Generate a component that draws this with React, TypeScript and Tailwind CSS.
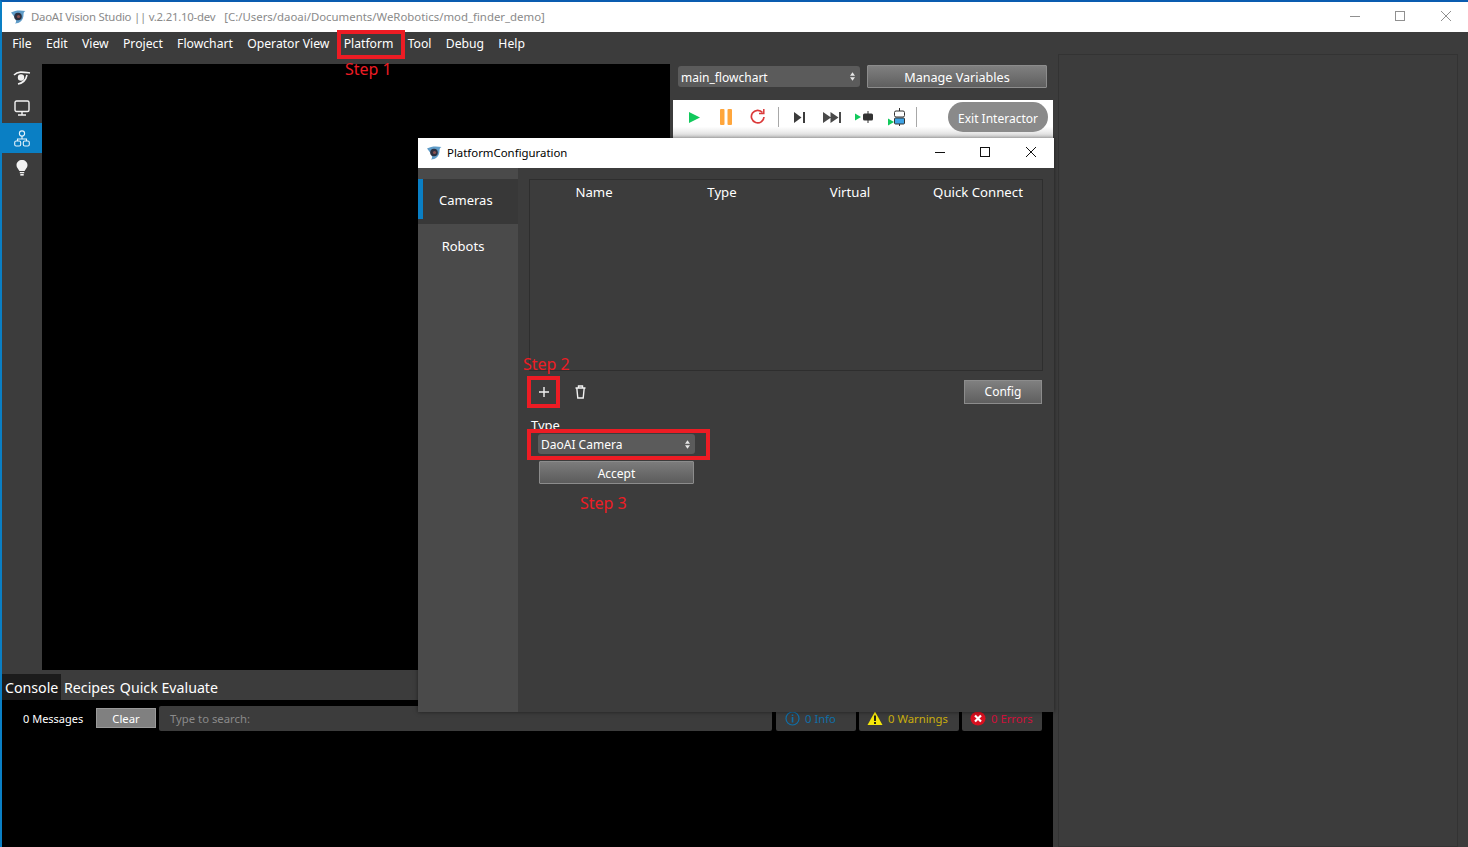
import React from 'react';

const font = { fontFamily: '"Noto Sans", "Open Sans", sans-serif' };

const menus = ['File', 'Edit', 'View', 'Project', 'Flowchart', 'Operator View', 'Platform', 'Tool', 'Debug', 'Help'];

const Logo = () => (
  <svg width="16" height="16" viewBox="0 0 16 16">
    <path d="M1 3.5 C5 1 11 1 15.5 2 C13.5 3 13.5 4.5 13.5 6 C13.5 11 9.5 14.5 5 14.5 C8 12 4 7.5 1 3.5 Z" fill="#5f9cc8" />
    <circle cx="8" cy="7.5" r="3.8" fill="#2c3040" />
    <circle cx="8.5" cy="7.5" r="1.6" fill="#8a5050" />
  </svg>
);

const Combo = ({ label, className }: { label: string; className: string }) => (
  <div className={`flex items-center justify-between rounded-[3px] bg-[#5b5b5b] pl-[3px] pr-[5px] pt-[2px] text-[12px] text-white ${className}`}>
    <span>{label}</span>
    <svg width="5" height="9" viewBox="0 0 6 10" fill="#e8e8e8" className="mb-[2px]">
      <path d="M3 0 L6 4 H0 Z M3 10 L0 6 H6 Z" />
    </svg>
  </div>
);

const Step = ({ label, className }: { label: string; className: string }) => (
  <span className={`absolute text-[16px] leading-[20px] text-[#ed1c24] ${className}`}>{label}</span>
);

const RedBox = ({ className }: { className: string }) => (
  <div className={`absolute border-[4px] border-[#ed1c24] ${className}`} />
);

const Sidebar = () => (
  <div className="flex w-[40px] shrink-0 flex-col items-stretch">
    <div className="flex h-[29px] items-center justify-center pb-[2px]">
      <svg width="18" height="16" viewBox="0 0 18 16" fill="none" stroke="#f2f2f2" strokeWidth="1.6">
        <path d="M1 5 C5 1 10 2 17 3" />
        <path d="M5 14 C10 13 13 10 14 5" />
        <circle cx="8" cy="7.5" r="3.2" fill="#f2f2f2" stroke="none" />
      </svg>
    </div>
    <div className="flex h-[30px] items-center justify-center">
      <svg width="16" height="16" viewBox="0 0 16 16" fill="none" stroke="#f2f2f2" strokeWidth="1.4">
        <rect x="1" y="1" width="14" height="10.5" rx="1.5" />
        <path d="M8 11.5 V14.5 M4 15 H12" />
      </svg>
    </div>
    <div className="flex h-[30px] items-center justify-center bg-[#0a7fc4]">
      <svg width="16" height="17" viewBox="0 0 16 17" fill="none" stroke="#e6f2fa" strokeWidth="1.1">
        <circle cx="8" cy="3.5" r="2.6" />
        <path d="M8 6 V9 M3.5 11 V9 H12.5 V11" />
        <rect x="0.7" y="11" width="6" height="5" rx="1.5" />
        <rect x="9.3" y="11" width="6" height="5" rx="1.5" />
      </svg>
    </div>
    <div className="flex h-[30px] items-center justify-center">
      <svg width="12" height="16" viewBox="0 0 12 16" fill="#f2f2f2">
        <path d="M6 0 C9 0 11.5 2 11.5 5.2 C11.5 7.8 9.4 9 8.6 11 H3.4 C2.6 9 0.5 7.8 0.5 5.2 C0.5 2 3 0 6 0 Z" />
        <rect x="3.8" y="12" width="4.4" height="1.3" />
        <rect x="4.3" y="14" width="3.4" height="1.6" />
      </svg>
    </div>
  </div>
);

const ToolbarIcons = () => (
  <div className="flex h-[38px] items-center bg-gradient-to-b from-white from-70% to-[#d8d8d8] pb-[4px] pl-[16px]">
    <svg width="11" height="11" viewBox="0 0 11 11" className="mr-[20px]" fill="#12c95c"><path d="M0 0 L11 5.5 L0 11 Z" /></svg>
    <svg width="12" height="16" viewBox="0 0 12 16" className="mr-[18px]" fill="#ffa63c">
      <rect x="0" y="0" width="4.5" height="16" rx="1" />
      <rect x="7.5" y="0" width="4.5" height="16" rx="1" />
    </svg>
    <svg width="15" height="16" viewBox="0 0 15 16" className="mr-[13px]" fill="none" stroke="#db3a3a" strokeWidth="1.7">
      <path d="M12.5 3.5 A6.3 6.3 0 1 0 14 8" />
      <path d="M9 4.5 H13.8 V0" strokeWidth="1.5" />
    </svg>
    <div className="mr-[15px] h-[20px] w-px bg-[#a8a8a8]" />
    <svg width="11" height="11" viewBox="0 0 11 11" className="mr-[18px]" fill="#3c3c3c">
      <path d="M0 0 L7.5 5.5 L0 11 Z" /><rect x="9" y="0" width="2" height="11" />
    </svg>
    <svg width="18" height="11" viewBox="0 0 18 11" className="mr-[14px]" fill="#4a4a4a">
      <path d="M0 0 L8 5.5 L0 11 Z M7.5 0 L15.5 5.5 L7.5 11 Z" /><rect x="16" y="0" width="2" height="11" />
    </svg>
    <svg width="18" height="12" viewBox="0 0 18 12" className="mr-[15px]">
      <path d="M0 2.5 L6 6 L0 9.5 Z" fill="#12c95c" />
      <rect x="8" y="2.5" width="10" height="7" rx="1.5" fill="#333" />
      <path d="M13 0 V12" stroke="#333" strokeWidth="1" />
    </svg>
    <svg width="17" height="18" viewBox="0 0 17 18" className="mr-[11px]">
      <path d="M0 10.5 L6 14 L0 17.5 Z" fill="#12c95c" />
      <rect x="6.5" y="3" width="10" height="6" rx="1.5" fill="#fff" stroke="#333" />
      <rect x="6.5" y="10" width="10" height="6" rx="1" fill="#3fa4e6" stroke="#333" />
      <path d="M11.5 0 V3 M11.5 16 V18" stroke="#333" />
    </svg>
    <div className="h-[20px] w-px bg-[#a8a8a8]" />
    <div className="ml-[31px] flex h-[30px] w-[100px] items-center justify-center rounded-full bg-[#8a8a8a] pt-[3px] text-[12px] text-white">
      Exit Interactor
    </div>
  </div>
);

const WinButtons = ({ color }: { color: string }) => (
  <div className="flex items-center gap-[35px] pb-[2px]">
    <svg width="10" height="10" viewBox="0 0 10 10" stroke={color} fill="none"><path d="M0 5.5 H10" /></svg>
    <svg width="10" height="10" viewBox="0 0 10 10" stroke={color} fill="none"><rect x="0.5" y="0.5" width="9" height="9" /></svg>
    <svg width="10" height="10" viewBox="0 0 10 10" className="ml-[1px]" stroke={color} fill="none"><path d="M0 0 L10 10 M10 0 L0 10" /></svg>
  </div>
);

const Console = () => (
  <div className="flex h-[177px] shrink-0 flex-col">
    <div className="flex h-[30px] items-end bg-[#3c3c3c] text-[14.2px] leading-[28px] text-white">
      <div className="h-[26px] w-[59px] bg-[#1c1c1c] pl-[3px]">Console</div>
      <div className="h-[26px] pl-[3px]">Recipes</div>
      <div className="h-[26px] pl-[5px]">Quick Evaluate</div>
    </div>
    <div className="flex-1 bg-black pt-[6px]">
      <div className="flex h-[25px] items-start pl-[21px] text-[11.3px] leading-[25px]">
        <span className="w-[73px] text-[11px] text-white">0 Messages</span>
        <div className="mt-[2px] flex h-[20px] w-[60px] items-center justify-center border border-[#9a9a9a] bg-[#808080] text-white">Clear</div>
        <div className="ml-[3px] flex h-[25px] w-[613px] items-center rounded-[2px] bg-[#3c3c3c] pl-[11px] text-[#8a8a8a]">Type to search:</div>
        <div className="ml-[4px] flex h-[25px] w-[80px] items-center rounded-[2px] bg-[#3c3c3c] pl-[9px] text-[#0f6fa8]">
          <svg width="15" height="15" viewBox="0 0 15 15" className="mr-[5px]" fill="none" stroke="#0f6fa8" strokeWidth="1.2">
            <circle cx="7.5" cy="7.5" r="6.5" /><path d="M7.5 6 V11.5 M7.5 3.5 V5" strokeWidth="1.6" />
          </svg>
          0 Info
        </div>
        <div className="ml-[3px] flex h-[25px] w-[100px] items-center rounded-[2px] bg-[#3c3c3c] pl-[8px] text-[#c8ad0c]">
          <svg width="16" height="15" viewBox="0 0 16 15" className="mr-[5px]">
            <path d="M8 0.5 L15.5 14 H0.5 Z" fill="#f4e70a" />
            <path d="M8 4.5 V10 M8 11 V13" stroke="#111" strokeWidth="1.8" />
          </svg>
          0 Warnings
        </div>
        <div className="ml-[3px] flex h-[25px] w-[80px] items-center rounded-[2px] bg-[#3c3c3c] pl-[8px] text-[#d0103a]">
          <svg width="16" height="15" viewBox="0 0 16 15" className="mr-[5px]">
            <ellipse cx="8" cy="7.5" rx="7.5" ry="7" fill="#d8101f" />
            <path d="M5 4.5 L11 10.5 M11 4.5 L5 10.5" stroke="#fff" strokeWidth="2.2" />
          </svg>
          0 Errors
        </div>
      </div>
    </div>
  </div>
);

const PlatformDialog = () => (
  <div className="absolute left-[416px] top-[136px] flex h-[574px] w-[636px] flex-col bg-[#3c3c3c] shadow-[0_0_4px_rgba(0,0,0,0.5)]">
    <div className="flex h-[30px] shrink-0 items-center justify-between bg-white pl-[8px] pr-[18px] text-[11.4px] text-black">
      <div className="flex items-center gap-[5px]">
        <Logo />
        <span>PlatformConfiguration</span>
      </div>
      <WinButtons color="#111" />
    </div>
    <div className="flex flex-1">
      <div className="w-[100px] shrink-0 bg-[#4a4a4a] pt-[11px] text-[13px] text-white">
        <div className="flex h-[45px] items-start bg-[#383838]">
          <div className="h-[40px] w-[5px] bg-[#0a7fc4]" />
          <span className="pl-[16px] pt-[11px] leading-[20px]">Cameras</span>
        </div>
        <div className="flex h-[44px] items-center justify-center pt-[2px] pr-[10px]">Robots</div>
      </div>
      <div className="flex-1 px-[11px] pt-[11px] text-white">
        <div className="h-[192px] border border-[#2e2e2e] text-[13.2px]">
          <div className="grid h-[25px] grid-cols-[128px_128px_128px_1fr] items-center text-center">
            <span>Name</span>
            <span>Type</span>
            <span>Virtual</span>
            <span>Quick Connect</span>
          </div>
        </div>
        <div className="mt-[8px] flex h-[25px] items-center justify-between">
          <div className="flex items-center pl-[9px]">
            <svg width="12" height="12" viewBox="0 0 12 12" stroke="#f2f2f2" strokeWidth="1.4"><path d="M6 1 V11 M1 6 H11" /></svg>
            <svg width="11" height="14" viewBox="0 0 11 14" className="ml-[25px]" fill="none" stroke="#f2f2f2" strokeWidth="1.4">
              <path d="M0.5 3 H10.5 M3.5 3 V1 H7.5 V3 M1.8 3 L2.8 13 H8.2 L9.2 3" />
            </svg>
          </div>
          <div className="mr-[1px] flex h-[24px] w-[78px] items-center justify-center border border-[#8c8c8c] bg-gradient-to-b from-[#808080] to-[#5f5f5f] pt-[1px] text-[12px]">Config</div>
        </div>
        <div className="mt-[12px] pl-[2px] text-[13px] leading-[18px]">Type</div>
        <div className="pl-[9px] text-[12px]">
          <Combo label="DaoAI Camera" className="h-[20px] w-[157px]" />
          <div className="ml-[1px] mt-[7px] flex h-[23px] w-[155px] items-center justify-center rounded-[1px] border border-[#8c8c8c] bg-gradient-to-b from-[#7c7c7c] to-[#5c5c5c] pt-[2px]">Accept</div>
        </div>
      </div>
    </div>
  </div>
);

export default function App() {
  return (
    <div className="relative h-[847px] w-[1468px] overflow-hidden border-l-[2px] border-t-[2px] border-l-[#0a7fc4] border-t-[#0a5cb0] bg-[#3c3c3c]" style={font}>
      {/* Title bar */}
      <div className="flex h-[30px] items-center justify-between bg-white pl-[8px] pr-[17px] text-[11.4px] text-[#8a8a8a]">
        <div className="flex items-center gap-[5px]">
          <Logo />
          <span className="tracking-[-0.25px]">DaoAI Vision Studio || v.2.21.10-dev</span>
          <span className="ml-[4px]">[C:/Users/daoai/Documents/WeRobotics/mod_finder_demo]</span>
        </div>
        <WinButtons color="#909090" />
      </div>

      <div className="flex h-[815px]">
        {/* Main window */}
        <div className="flex w-[1051px] shrink-0 flex-col">
          <div className="flex h-[32px] shrink-0 items-center pb-[8px] pl-[3px] text-[12.2px] text-white">
            {menus.map((m) => (
              <span key={m} className="px-[7.15px]">{m}</span>
            ))}
          </div>
          <div className="flex flex-1">
            <Sidebar />
            <div className="w-[628px] bg-black" />
            <div className="flex-1 pl-[3px]">
              <div className="flex pl-[5px] pt-[1px]">
                <Combo label="main_flowchart" className="mt-[1px] h-[21px] w-[182px]" />
                <div className="ml-[7px] flex h-[23px] w-[180px] items-center justify-center rounded-[1px] border border-[#8c8c8c] bg-gradient-to-b from-[#808080] to-[#5f5f5f] pt-[3px] text-[12.6px] text-white">
                  Manage Variables
                </div>
              </div>
              <div className="mt-[12px]">
                <ToolbarIcons />
              </div>
            </div>
          </div>
          <Console />
        </div>

        {/* Right panel */}
        <div className="ml-[5px] mt-[22px] w-[400px] shrink-0 border border-[#333333]" />
      </div>

      <PlatformDialog />

      {/* Tutorial annotations */}
      <RedBox className="left-[335px] top-[28px] h-[29px] w-[68px]" />
      <Step label="Step 1" className="left-[343px] top-[57px]" />
      <RedBox className="left-[525px] top-[374px] h-[32px] w-[33px]" />
      <Step label="Step 2" className="left-[521px] top-[352px]" />
      <RedBox className="left-[525px] top-[427px] h-[31px] w-[183px]" />
      <Step label="Step 3" className="left-[578px] top-[491px]" />
    </div>
  );
}
